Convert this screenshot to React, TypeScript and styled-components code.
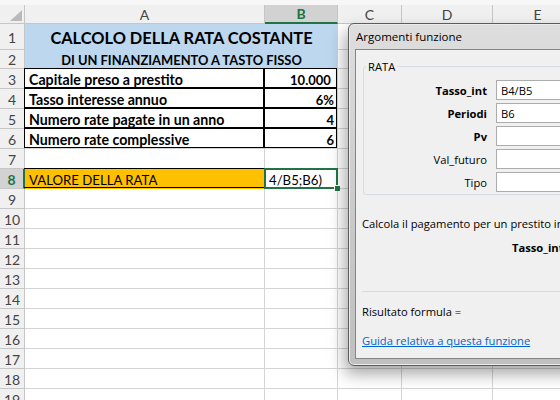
import React from 'react';
import styled, { createGlobalStyle, css } from 'styled-components';

const GlobalStyle = createGlobalStyle`
  html, body {
    margin: 0;
    padding: 0;
    background: #ffffff;
    overflow: hidden;
  }
`;

const Screen = styled.div`
  position: relative;
  width: 560px;
  height: 400px;
  overflow: hidden;
  background: #ffffff;
  font-family: Lato, "Open Sans", sans-serif;
`;

const TopStrip = styled.div`
  height: 5px;
  background: #f7f7f7;
`;

const Sheet = styled.div`
  display: grid;
  grid-template-columns: 25px 240px 73px 64px 91px 90px;
  grid-template-rows: 19px 26px 19px repeat(17, 20px);
`;

const Corner = styled.div`
  position: relative;
  box-sizing: border-box;
  background: #f0f0f0;
  border-right: 1px solid #c6c6c6;
  border-bottom: 1px solid #c6c6c6;

  &::after {
    content: '';
    position: absolute;
    right: 2px;
    bottom: 2px;
    border-left: 12px solid transparent;
    border-bottom: 11px solid #bababa;
  }
`;

const ColHeader = styled.div<{ $active?: boolean }>`
  box-sizing: border-box;
  display: flex;
  align-items: center;
  justify-content: center;
  font-size: 14px;
  background: ${p => (p.$active ? '#d2d2d2' : '#f0f0f0')};
  color: ${p => (p.$active ? '#217346' : '#444444')};
  font-weight: ${p => (p.$active ? 700 : 400)};
  border-right: 1px solid #c6c6c6;
  border-bottom: ${p => (p.$active ? '2px solid #217346' : '1px solid #c6c6c6')};
`;

const RowHeader = styled.div<{ $active?: boolean }>`
  box-sizing: border-box;
  display: flex;
  align-items: center;
  justify-content: center;
  padding-top: 1px;
  font-size: 14px;
  background: ${p => (p.$active ? '#d2d2d2' : '#f0f0f0')};
  color: ${p => (p.$active ? '#217346' : '#444444')};
  font-weight: ${p => (p.$active ? 700 : 400)};
  border-right: ${p => (p.$active ? '2px solid #217346' : '1px solid #c6c6c6')};
  border-bottom: 1px solid #c6c6c6;
`;

type Edges = 'all' | 'tb';

const Cell = styled.div<{
  $bg?: string;
  $bold?: boolean;
  $align?: 'left' | 'right' | 'center';
  $size?: number;
  $span?: number;
  $edges?: Edges;
  $selected?: boolean;
}>`
  position: relative;
  box-sizing: border-box;
  display: flex;
  align-items: center;
  padding: 2px 3px 0 4px;
  white-space: pre;
  color: #000000;
  font-size: ${p => p.$size ?? 14.2}px;
  font-weight: ${p => (p.$bold ? 700 : 400)};
  justify-content: ${p =>
    p.$align === 'right' ? 'flex-end' : p.$align === 'center' ? 'center' : 'flex-start'};
  background: ${p => p.$bg ?? '#ffffff'};
  border-right: 1px solid #d4d4d4;
  border-bottom: 1px solid ${p => p.$bg ?? '#d4d4d4'};
  grid-column: ${p => (p.$span ? `span ${p.$span}` : 'auto')};

  ${p =>
    p.$edges &&
    css`
      &::after {
        content: '';
        position: absolute;
        left: -1px;
        top: -1px;
        right: 0;
        bottom: 0;
        z-index: 1;
        border-top: 1px solid #000;
        border-bottom: 1px solid #000;
        border-left: ${p.$edges === 'all' ? '1px solid #000' : 'none'};
        border-right: ${p.$edges === 'all' ? '1px solid #000' : 'none'};
      }
    `}

  ${p =>
    p.$selected &&
    css`
      &::after {
        content: '';
        position: absolute;
        left: -1px;
        top: -1px;
        right: -1px;
        bottom: -1px;
        z-index: 2;
        border: 2px solid #217346;
      }
    `}
`;

const FillHandle = styled.span`
  position: absolute;
  right: -3px;
  bottom: -3px;
  width: 5px;
  height: 5px;
  background: #217346;
  border-left: 1px solid #ffffff;
  border-top: 1px solid #ffffff;
  z-index: 3;
`;

/* ---------- dialog ---------- */

const Dialog = styled.div`
  position: absolute;
  left: 348px;
  top: 23px;
  width: 290px;
  height: 343px;
  box-sizing: border-box;
  display: flex;
  flex-direction: column;
  padding: 0 6px 6px 6px;
  border: 1px solid #5c5c5c;
  border-radius: 6px;
  background: linear-gradient(#dedede, #c8c8c8 60%, #c0c0c0);
  box-shadow: inset 0 0 0 1px #ececec, -3px 8px 16px rgba(0, 0, 0, 0.35);
  font-family: "Open Sans", "Noto Sans", sans-serif;
  font-size: 11.2px;
  color: #000000;
  z-index: 10;
`;

const TitleBar = styled.div`
  height: 25px;
  display: flex;
  align-items: center;
  padding-left: 1px;
  font-size: 11.5px;
`;

const Panel = styled.div`
  flex: 1;
  box-sizing: border-box;
  border: 1px solid #858585;
  background: #f0f0f0;
  padding: 9px 0 0 6px;
  display: flex;
  flex-direction: column;
  white-space: nowrap;
  overflow: hidden;
`;

const Group = styled.fieldset`
  margin: 0 0 0 1px;
  padding: 4px 0 4px 0;
  height: 136px;
  box-sizing: border-box;
  border: 1px solid #d5dde3;
  border-radius: 3px;

  legend {
    margin-left: 2px;
    padding: 0 2px;
    font-size: 11.2px;
  }
`;

const ArgGrid = styled.div`
  display: grid;
  grid-template-columns: 123px 220px;
  grid-auto-rows: 20px;
  column-gap: 9px;
  row-gap: 3px;
  margin-top: 2px;
`;

const ArgLabel = styled.div<{ $bold?: boolean }>`
  display: flex;
  align-items: center;
  justify-content: flex-end;
  font-weight: ${p => (p.$bold ? 700 : 400)};
`;

const ArgInput = styled.div`
  box-sizing: border-box;
  display: flex;
  align-items: center;
  padding-left: 4px;
  background: #ffffff;
  border: 1px solid #acacac;
`;

const Description = styled.div`
  margin-top: 20px;
  height: 17px;
  line-height: 17px;
`;

const ArgHelp = styled.div`
  margin-top: 7px;
  padding-left: 150px;
  height: 17px;
  line-height: 17px;

  b {
    margin-right: 14px;
  }
`;

const Separator = styled.div`
  margin-top: 35px;
  border-top: 1px solid #d3dae1;
`;

const Result = styled.div`
  margin-top: 11px;
  height: 17px;
  line-height: 17px;
`;

const HelpLink = styled.a`
  margin-top: 12px;
  color: #0066cc;
  text-decoration: underline;
  line-height: 17px;
`;

const args = [
  { name: 'Tasso_int', value: 'B4/B5', bold: true },
  { name: 'Periodi', value: 'B6', bold: true },
  { name: 'Pv', value: '', bold: true },
  { name: 'Val_futuro', value: '', bold: false },
  { name: 'Tipo', value: '', bold: false },
];

const dataRows = [
  { n: 3, label: 'Capitale preso a prestito', value: '10.000 ' },
  { n: 4, label: 'Tasso interesse annuo', value: '6%' },
  { n: 5, label: 'Numero rate pagate in un anno', value: '4' },
  { n: 6, label: 'Numero rate complessive', value: '6' },
];

const emptyRows = Array.from({ length: 11 }, (_, i) => i + 9);
const COLS = ['A', 'B', 'C', 'D', 'E'];

const App: React.FC = () => {
  return (
    <Screen>
      <GlobalStyle />
      <TopStrip />
      <Sheet>
        <Corner />
        {COLS.map(c => (
          <ColHeader key={c} $active={c === 'B'}>
            {c}
          </ColHeader>
        ))}

        <RowHeader>1</RowHeader>
        <Cell $span={2} $bg="#bdd7ee" $bold $align="center" $size={16.4}>
          CALCOLO DELLA RATA COSTANTE
        </Cell>
        <Cell />
        <Cell />
        <Cell />

        <RowHeader>2</RowHeader>
        <Cell $span={2} $bg="#bdd7ee" $bold $align="center" $size={12.9}>
          DI UN FINANZIAMENTO A TASTO FISSO
        </Cell>
        <Cell />
        <Cell />
        <Cell />

        {dataRows.map(r => (
          <React.Fragment key={r.n}>
            <RowHeader>{r.n}</RowHeader>
            <Cell $bold $edges="all">
              {r.label}
            </Cell>
            <Cell $bold $edges="all" $align="right" $size={13}>
              {r.value}
            </Cell>
            <Cell />
            <Cell />
            <Cell />
          </React.Fragment>
        ))}

        <RowHeader>7</RowHeader>
        <Cell />
        <Cell />
        <Cell />
        <Cell />
        <Cell />

        <RowHeader $active>8</RowHeader>
        <Cell $bg="#ffc000" $edges="tb" $size={13.2}>
          VALORE DELLA RATA
        </Cell>
        <Cell $selected $size={13.2}>
          4/B5;B6)
          <FillHandle />
        </Cell>
        <Cell />
        <Cell />
        <Cell />

        {emptyRows.map(n => (
          <React.Fragment key={n}>
            <RowHeader>{n}</RowHeader>
            <Cell />
            <Cell />
            <Cell />
            <Cell />
            <Cell />
          </React.Fragment>
        ))}
      </Sheet>

      <Dialog>
        <TitleBar>Argomenti funzione</TitleBar>
        <Panel>
          <Group>
            <legend>RATA</legend>
            <ArgGrid>
              {args.map(a => (
                <React.Fragment key={a.name}>
                  <ArgLabel $bold={a.bold}>{a.name}</ArgLabel>
                  <ArgInput>{a.value}</ArgInput>
                </React.Fragment>
              ))}
            </ArgGrid>
          </Group>
          <Description>
            Calcola il pagamento per un prestito in base a pagamenti costanti e a un tasso di
            interesse costante.
          </Description>
          <ArgHelp>
            <b>Tasso_int</b>è il tasso di interesse per periodo del prestito.
          </ArgHelp>
          <Separator />
          <Result>Risultato formula =</Result>
          <HelpLink href="#">Guida relativa a questa funzione</HelpLink>
        </Panel>
      </Dialog>
    </Screen>
  );
};

export default App;
